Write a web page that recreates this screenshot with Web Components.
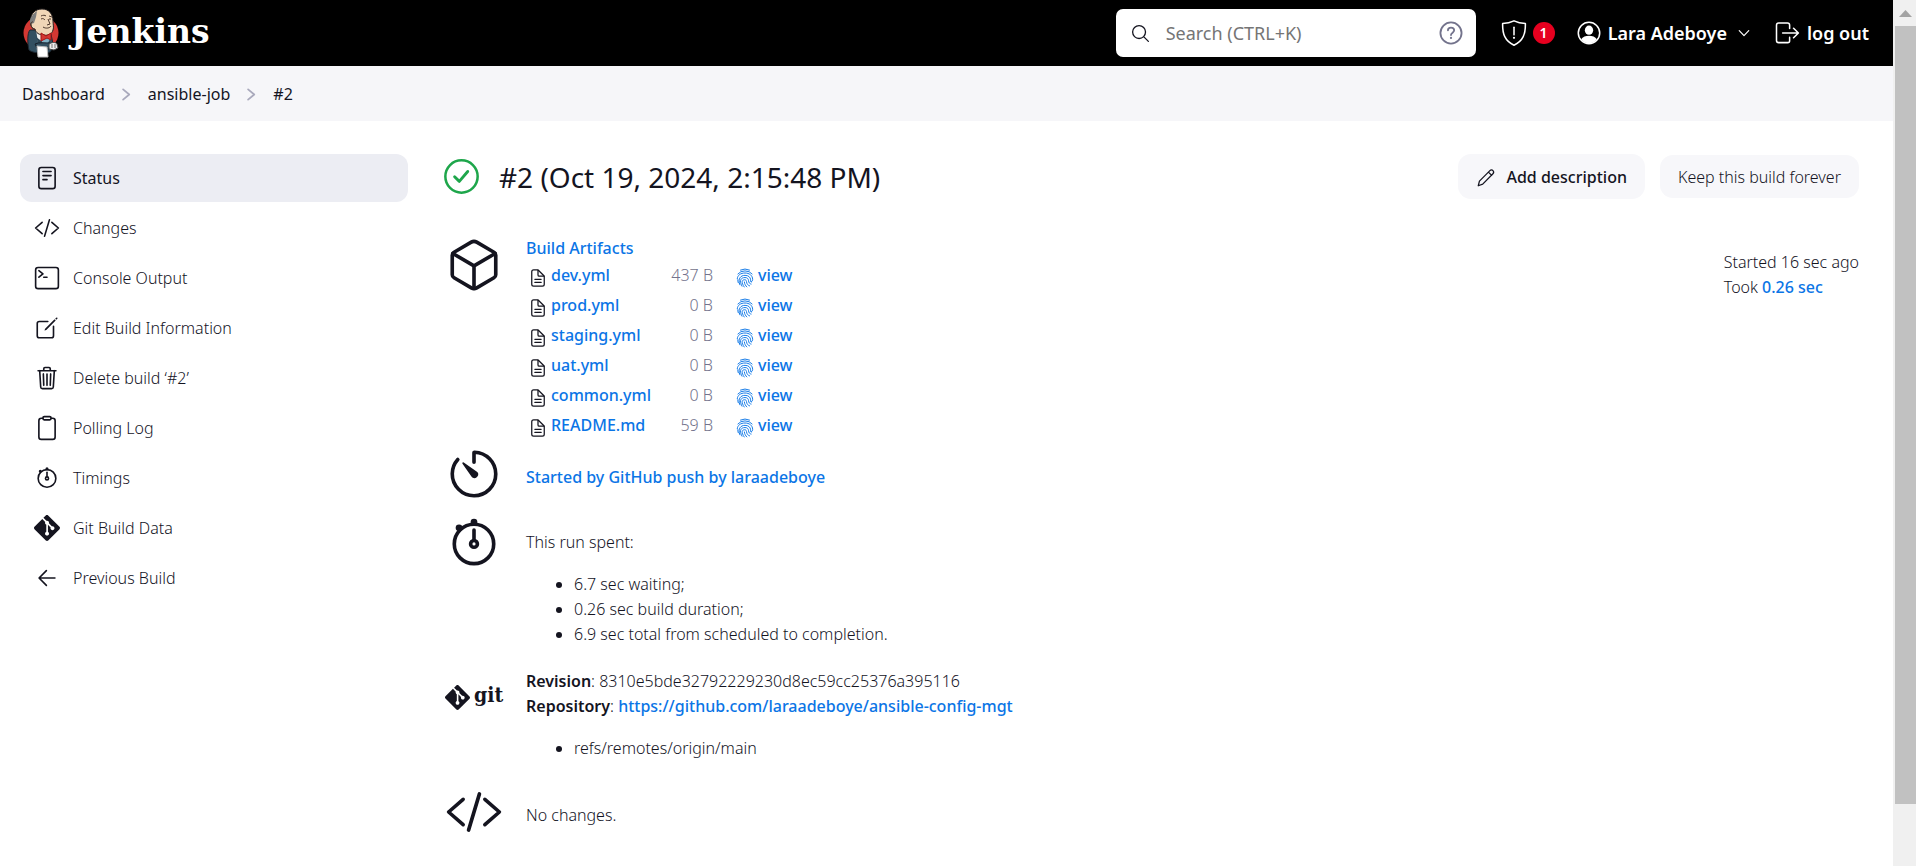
<!DOCTYPE html>
<html lang="en">
<head>
<meta charset="utf-8">
<title>ansible-job #2 [Jenkins]</title>
<style>
  body { margin: 0; background: #fff; }
</style>
</head>
<body>
<jenkins-app></jenkins-app>

<script>
/* ---------- icons ---------- */
const CODE = '<path d="M160 368L32 256l128-112M352 368l128-112-128-112M304 96l-96 320"/>';
const STOPWATCH = '<circle cx="256" cy="264" r="174"/><path d="M256 142v82"/><circle cx="256" cy="264" r="30"/><circle cx="256" cy="72" r="14" fill="currentColor"/><circle cx="124" cy="122" r="14" fill="currentColor"/>';
const ICONS = {
  status: '<rect x="96" y="48" width="320" height="416" rx="48"/><path d="M176 128h160M176 208h160M176 288h80"/>',
  code: CODE,
  terminal: '<rect x="32" y="48" width="448" height="416" rx="48"/><path d="M96 112l80 64-80 64M192 240h64"/>',
  edit: '<path d="M384 224v184a40 40 0 01-40 40H104a40 40 0 01-40-40V168a40 40 0 0140-40h167.48"/><path fill="currentColor" stroke="none" d="M459.94 53.25a16.06 16.06 0 00-23.22-.56L424.35 65a8 8 0 000 11.31l11.34 11.32a8 8 0 0011.34 0l12.06-12c6.1-6.09 6.67-16.01.85-22.38zM399.34 90L218.82 270.2a9 9 0 00-2.31 3.93L208.16 299a3.91 3.91 0 004.86 4.86l24.85-8.35a9 9 0 003.93-2.31L422 112.66a9 9 0 000-12.66l-9.95-10a9 9 0 00-12.71 0z"/>',
  trash: '<path d="M112 112l20 320c.95 18.49 14.4 32 32 32h184c17.67 0 30.87-13.51 32-32l20-320M80 112h352M192 112V72a24 24 0 0124-24h80a24 24 0 0124 24v40M256 176v224M184 176l8 224M328 176l-8 224"/>',
  clipboard: '<path d="M336 64h32a48 48 0 0148 48v320a48 48 0 01-48 48H144a48 48 0 01-48-48V112a48 48 0 0148-48h32"/><rect x="176" y="32" width="160" height="64" rx="26"/>',
  stopwatch: STOPWATCH,
  back: '<path d="M244 400L100 256l144-144M120 256h292"/>',
  cube: '<path d="M448 341.37V170.61A32 32 0 00432.11 143l-152-88.46a47.94 47.94 0 00-48.24 0L80 143a32 32 0 00-16 27.61v170.76A32 32 0 0080 369l152 88.46a48 48 0 0048.24 0L432 369a32 32 0 0016-27.63z"/><path d="M69 153.99l187 110 187-110M256 463.99v-200"/>',
  timer: '<path d="M112.91 128A191.85 191.85 0 0064 254c-1.18 106.35 85.65 193.8 192 194 106.2.2 192-85.83 192-192 0-104.54-83.55-189.61-187.5-192a4.36 4.36 0 00-4.5 4.37V152"/><path fill="currentColor" stroke="none" d="M233.38 278.63l-79-113a8.13 8.13 0 0111.32-11.32l113 79a32.5 32.5 0 01-37.25 53.26 33.21 33.21 0 01-8.07-7.94z"/>',
  file: '<path d="M416 221.25V416a48 48 0 01-48 48H144a48 48 0 01-48-48V96a48 48 0 0148-48h98.75a32 32 0 0122.62 9.37l141.26 141.26a32 32 0 019.37 22.62z"/><path d="M256 56v120a32 32 0 0032 32h120M176 288h160M176 368h160"/>',
  fingerprint: '<g stroke-width="24"><path d="M140 52Q256-2 372 52M74 152Q140 74 256 74t182 78"/><path d="M58 274C62 184 146 128 256 128s194 64 196 164c0 40-14 56-40 56"/><path d="M84 378c-10-30-16-60-12-80M124 430c-28-80-22-138 4-180 26-40 70-62 128-62 90 0 140 50 144 114 2 50 10 60 20 62M178 466c-42-84-44-136-26-172 18-32 52-50 104-50 58 0 88 34 90 76 2 60 34 86 66 92"/><path d="M236 486c-42-62-54-104-50-144 4-26 26-42 62-42 32 0 44 22 46 48 6 64 40 98 80 110M240 358c4 56 30 96 62 126"/></g>',
  search: '<path d="M221.09 64a157.09 157.09 0 10157.09 157.09A157.1 157.1 0 00221.09 64zM338.29 338.29L448 448"/>',
  help: '<g stroke-width="36"><circle cx="256" cy="256" r="208"/><path d="M196 204c0-34 26-54 60-54s62 20 62 54c0 46-62 44-62 92"/></g><circle cx="256" cy="354" r="22" fill="currentColor" stroke="none"/>',
  shield: '<path d="M464 84c-80-4-150-22-208-50-58 28-128 46-208 50-4 190 40 316 208 396C424 400 468 274 464 84z"/><path d="M256 150v140"/><circle cx="256" cy="344" r="20" fill="currentColor" stroke="none"/>',
  user: '<circle cx="256" cy="256" r="196"/><g fill="currentColor" stroke="none"><ellipse cx="256" cy="204" rx="76" ry="84"/><path d="M112 370c30-50 84-66 144-66s114 16 144 66c-36 46-86 74-144 74s-108-28-144-74z"/></g>',
  logout: '<path d="M304 336v60a36 36 0 01-36 36H104a40 40 0 01-40-40V112a40 40 0 0140-40h160a40 40 0 0140 40v60M376 344l88-88-88-88M176 256h280"/>',
  down: '<path d="M82 170l174 180 174-180"/>',
  next: '<path d="M140 80l210 176-210 176"/>',
  pencil: '<path d="M58 454l30-118L356 68c24-24 56-24 78 0s24 54 0 78L172 414zM318 106l84 84"/>',
  success: '<circle cx="256" cy="256" r="192" stroke-width="30"/><path d="M330 196L230 314l-56-56" stroke-width="34"/>',
};
const GIT = '<svg viewBox="0 0 24 24" aria-hidden="true"><path fill="currentColor" d="M23.546 10.93L13.067.452c-.604-.603-1.582-.603-2.188 0L8.708 2.627l2.76 2.76c.645-.215 1.379-.07 1.889.441.516.515.658 1.258.438 1.9l2.658 2.66c.645-.223 1.387-.078 1.9.435.721.72.721 1.884 0 2.604-.719.719-1.881.719-2.6 0-.539-.541-.674-1.337-.404-1.996L12.86 8.955v6.525c.176.086.342.203.488.348.713.721.713 1.883 0 2.6-.719.721-1.889.721-2.609 0-.719-.719-.719-1.879 0-2.598.182-.18.387-.316.605-.406V8.835c-.217-.091-.424-.222-.6-.401-.545-.545-.676-1.342-.396-2.009L7.636 3.7.45 10.881c-.6.605-.6 1.584 0 2.189l10.48 10.477c.604.604 1.582.604 2.186 0l10.43-10.43c.605-.603.605-1.582 0-2.187"/></svg>';

class Base extends HTMLElement {
  render(css, html) {
    this.attachShadow({ mode: 'open' }).innerHTML = `<style>*{box-sizing:border-box}${css}</style>${html}`;
  }
}
const define = (name, css, html) => customElements.define(name, class extends Base {
  connectedCallback() { if (!this.shadowRoot) this.render(css, typeof html === 'function' ? html(this) : html); }
});

define('ui-icon', `
  :host { display: block; flex: none; width: var(--size, 26px); height: var(--size, 26px); }
  svg { display: block; width: 100%; height: 100%; overflow: visible; stroke-width: var(--stroke, 32); }`,
  el => el.getAttribute('name') === 'git' ? GIT :
    `<svg viewBox="${el.getAttribute('name') === 'success' ? '48 48 416 416' : '0 0 512 512'}" fill="none" stroke="currentColor" stroke-linecap="round" stroke-linejoin="round" aria-hidden="true">${ICONS[el.getAttribute('name')]}</svg>`);

/* ---------- header ---------- */
define('jenkins-logo', `
  :host { display: block; }
  a { display: flex; align-items: center; gap: 12px; color: #fff; text-decoration: none; font: 700 33px/46px "DejaVu Serif", serif; }
  svg { display: block; width: 36px; height: 50px; }
  span { padding-bottom: 2px; }`, `
  <a href="#">
    <svg viewBox="0 0 36 50" aria-hidden="true">
      <ellipse cx="18" cy="25" rx="17.5" ry="17" fill="#d33833"/>
      <path d="M7 22c-3 3-2.500 14-1 20 2 2 8 3 12 3h7c3-1 5-5 5-9l-2-10-7-4z" fill="#335061" stroke="#1d2730"/>
      <path d="M13 22l2 12 9 2 4-10-4-5z" fill="#f0f0ee"/>
      <path d="M13 29l5 13h7l3-15-4 10z" fill="#2c4554"/>
      <path d="M18 30l5-3 4 4-3 6-4-1z" fill="#81b0c4"/>
      <path d="M8 13C7 5 13 1 19 1c7 0 11 5 11 12 0 4 1 6 0 9-1 4-5 6-9 5-5 0-8-2-9-6-3 0-5-4-4-8z" fill="#f0d6b7" stroke="#231f20"/>
      <path d="M9 8c-2 2-3 6-1 8l3-1 2-6 1-6c-2 1-4 3-5 5z" fill="#7d7e7e"/>
      <path d="M10 14c-3-1-3 6 1 7M18 8c2-1 4-1 5 0M26 8l3 1M18 11c2-1 3 0 4 1M26 11h2M25 11l2 5-3 1M20 19c3 2 7 1 8-1" fill="none" stroke="#49352a"/>
      <path d="M18 25l5 3 5-3v7l-4-2-6 3z" fill="#d33833" stroke="#a31414"/>
      <path d="M12 36c4-2 10-1 15-1l2 3-3 3-12-1z" fill="#335061" stroke="#16202a"/>
      <path d="M14 38l10 1 1 10H15z" fill="#fff" stroke="#bbb"/>
      <path d="M26 36c3-2 7-2 8 0l1 4-4 2-5-1z" fill="#eee" stroke="#444"/>
      <path d="M29 36v4M32 36v4" stroke="#777"/>
    </svg>
    <span>Jenkins</span>
  </a>`);

define('search-box', `
  :host { display: block; width: 360px; }
  label { display: flex; align-items: center; height: 48px; padding: 0 12px 0 14px; gap: 15px; background: #fff; border-radius: 7px; color: #14141f; }
  .find { --size: 21px; }
  .help { --size: 26px; color: #73738c; }
  input { flex: 1; min-width: 0; height: 40px; padding: 0; border: 0; outline: 0; background: none; font: 400 18px/24px "Noto Sans", sans-serif; color: #14141f; }
  input::placeholder { color: #757575; opacity: 1; }`, `
  <label><ui-icon class="find" name="search"></ui-icon>
  <input type="text" placeholder="Search (CTRL+K)" aria-label="Search">
  <ui-icon class="help" name="help"></ui-icon></label>`);

define('page-header', `
  :host { display: block; background: #000; }
  header { display: flex; align-items: center; height: 66px; padding: 0 24px 0 23px; color: #fff; }
  jenkins-logo { margin-right: auto; }
  nav { display: flex; align-items: center; margin-left: 24px; font: 600 18px/24px "Noto Sans", sans-serif; }
  a { display: flex; align-items: center; gap: 5px; color: #fff; text-decoration: none; }
  ui-icon { --size: 28px; --stroke: 28; }
  .user { margin-left: 20px; }
  .down { --size: 14px; --stroke: 44; margin-left: 5px; }
  .out { margin-left: 22px; gap: 6px; }
  .badge { width: 22px; border-radius: 11px; background: #e6001f; text-align: center; font: 600 14px/22px "Noto Sans", sans-serif; }`, `
  <header>
    <jenkins-logo></jenkins-logo>
    <search-box></search-box>
    <nav>
      <a href="#" aria-label="Security warnings"><ui-icon name="shield"></ui-icon><span class="badge">1</span></a>
      <a class="user" href="#"><ui-icon name="user"></ui-icon><span>Lara Adeboye</span><ui-icon class="down" name="down"></ui-icon></a>
      <a class="out" href="#"><ui-icon name="logout"></ui-icon><span>log out</span></a>
    </nav>
  </header>`);

define('bread-crumbs', `
  :host { display: block; background: #f6f6f9; }
  nav { display: flex; align-items: center; gap: 14px; height: 55px; padding: 2px 22px 0; font-weight: 400; }
  a { color: #14141f; text-decoration: none; }
  ui-icon { --size: 15px; --stroke: 60; color: #a9a9bc; }`, `
  <nav aria-label="Breadcrumbs"><a href="#">Dashboard</a><ui-icon name="next"></ui-icon><a href="#">ansible-job</a><ui-icon name="next"></ui-icon><a href="#">#2</a></nav>`);

/* ---------- sidebar ---------- */
define('task-link', `
  :host { display: block; }
  a { display: flex; align-items: center; gap: 13px; height: 48px; padding: 0 14px; border-radius: 12px; color: #14141f; text-decoration: none; }
  :host([active]) a { background: #ecedf3; font-weight: 400; }`,
  el => `<a href="#"><ui-icon name="${el.getAttribute('icon')}"></ui-icon><slot></slot></a>`);

define('side-panel', `
  :host { display: block; }
  nav { display: flex; flex-direction: column; gap: 2px; }`, `
  <nav>
    <task-link icon="status" active>Status</task-link>
    <task-link icon="code">Changes</task-link>
    <task-link icon="terminal">Console Output</task-link>
    <task-link icon="edit">Edit Build Information</task-link>
    <task-link icon="trash">Delete build ‘#2’</task-link>
    <task-link icon="clipboard">Polling Log</task-link>
    <task-link icon="stopwatch">Timings</task-link>
    <task-link icon="git">Git Build Data</task-link>
    <task-link icon="back">Previous Build</task-link>
  </nav>`);

/* ---------- main panel ---------- */
define('build-title', `
  :host { display: flex; align-items: center; height: 45px; }
  h1 { flex: 1; margin: 0 0 0 20px; font: 400 28px/40px "Noto Sans", sans-serif; color: #14141f; }
  .ok { --size: 35px; color: #1ea64b; }
  button { display: flex; align-items: center; gap: 10px; height: 43px; padding: 2px 18px 0; border: 0; border-radius: 13px; background: #f7f7fa; font: inherit; color: #14141f; }
  .add { height: 45px; margin-right: 15px; font-weight: 500; }
  .add ui-icon { --size: 20px; }`, `
  <ui-icon class="ok" name="success"></ui-icon>
  <h1>#2 (Oct 19, 2024, 2:15:48 PM)</h1>
  <button type="button" class="add"><ui-icon name="pencil"></ui-icon>Add description</button>
  <button type="button">Keep this build forever</button>`);

define('artifact-list', `
  :host { display: block; }
  a { color: #0b75e6; text-decoration: none; font-weight: 500; }
  .all { display: block; line-height: 24px; }
  table { border-spacing: 0; }
  td { height: 30px; padding: 0; }
  div { display: flex; gap: 3px; line-height: 30px; }
  ui-icon { --size: 20px; margin-top: 8px; }
  .name { width: 133px; padding-left: 2px; }
  .size { width: 54px; text-align: right; color: #73738c; }
  .view { padding-left: 22px; }
  .view ui-icon { color: #0b75e6; }`, () => `
  <a class="all" href="#">Build Artifacts</a>
  <table><tbody>${[['dev.yml', '437 B'], ['prod.yml', '0 B'], ['staging.yml', '0 B'], ['uat.yml', '0 B'], ['common.yml', '0 B'], ['README.md', '59 B']].map(([n, s]) => `
    <tr><td class="name"><div><ui-icon name="file"></ui-icon><a href="#">${n}</a></div></td>
    <td class="size">${s}</td>
    <td class="view"><div><ui-icon name="fingerprint"></ui-icon><a href="#">view</a></div></td></tr>`).join('')}
  </tbody></table>`);

define('git-logo', `
  :host { display: flex; align-items: center; gap: 4px; height: 58px; font: 700 21px/24px "DejaVu Serif Condensed", "DejaVu Serif", serif; color: #14141f; }
  ui-icon { --size: 25px; }
  span { padding-bottom: 4px; }`, `<ui-icon name="git"></ui-icon><span>git</span>`);

define('build-fact', `
  :host { display: grid; grid-template-columns: 58px 1fr; column-gap: 23px; align-items: start; }
  ::slotted([slot=icon]) { --size: 58px; }
  .body { padding-top: var(--drop, 0); }`, `<slot name="icon"></slot><div class="body"><slot></slot></div>`);

define('build-summary', `
  :host { display: flex; justify-content: space-between; margin-top: 37px; }
  a { color: #0b75e6; text-decoration: none; font-weight: 500; }
  b { font-weight: 600; }
  p { margin: 0; }
  ul { margin: 17px 0 0; padding-left: 48px; }
  .facts { flex: 1; padding-left: 1px; }
  .cause { margin-top: 5px; --drop: 20px; }
  .times { margin-top: 11px; --drop: 16px; }
  .scm { margin-top: 21px; --drop: 1px; }
  .changes { margin-top: 22px; --drop: 20px; }
  .when { padding-top: 14px; }`, `
  <div class="facts">
    <build-fact><ui-icon slot="icon" name="cube"></ui-icon><artifact-list></artifact-list></build-fact>
    <build-fact class="cause"><ui-icon slot="icon" name="timer"></ui-icon><a href="#">Started by GitHub push by laraadeboye</a></build-fact>
    <build-fact class="times"><ui-icon slot="icon" name="stopwatch"></ui-icon>
      <p>This run spent:</p>
      <ul><li>6.7 sec waiting;</li><li>0.26 sec build duration;</li><li>6.9 sec total from scheduled to completion.</li></ul>
    </build-fact>
    <build-fact class="scm"><git-logo slot="icon"></git-logo>
      <p><b>Revision</b>: 8310e5bde32792229230d8ec59cc25376a395116</p>
      <p><b>Repository</b>: <a href="#">https://github.com/laraadeboye/ansible-config-mgt</a></p>
      <ul><li>refs/remotes/origin/main</li></ul>
    </build-fact>
    <build-fact class="changes"><ui-icon slot="icon" name="code"></ui-icon><p>No changes.</p></build-fact>
  </div>
  <div class="when"><p>Started 16 sec ago</p><p>Took <a href="#">0.26 sec</a></p></div>`);

/* ---------- shell ---------- */
define('scroll-track', `
  :host { display: flex; flex-direction: column; position: sticky; top: 0; height: 100vh; padding-left: 2px; background: #f0f0f0; }
  svg { display: block; width: 21px; height: 26px; }
  .thumb { flex: 778; background: #c1c1c1; }
  .rest { flex: 62; }`, `
  <svg viewBox="0 0 21 26" aria-hidden="true"><path d="M4 17l6.500-7 6.500 7z" fill="#a3a3a3"/></svg>
  <div class="thumb"></div><div class="rest"></div>`);

define('jenkins-app', `
  :host { display: grid; grid-template-columns: minmax(0, 1fr) 23px; min-height: 100vh; box-sizing: border-box; font: 350 16px/25px "Noto Sans", sans-serif; color: #14141f; }
  .content { display: grid; grid-template-columns: 388px minmax(0, 1fr); column-gap: 36px; padding: 33px 34px 0 20px; }`, `
  <div>
    <page-header></page-header>
    <bread-crumbs></bread-crumbs>
    <div class="content">
      <side-panel></side-panel>
      <main><build-title></build-title><build-summary></build-summary></main>
    </div>
  </div>
  <scroll-track aria-hidden="true"></scroll-track>`);
</script>
</body>
</html>
